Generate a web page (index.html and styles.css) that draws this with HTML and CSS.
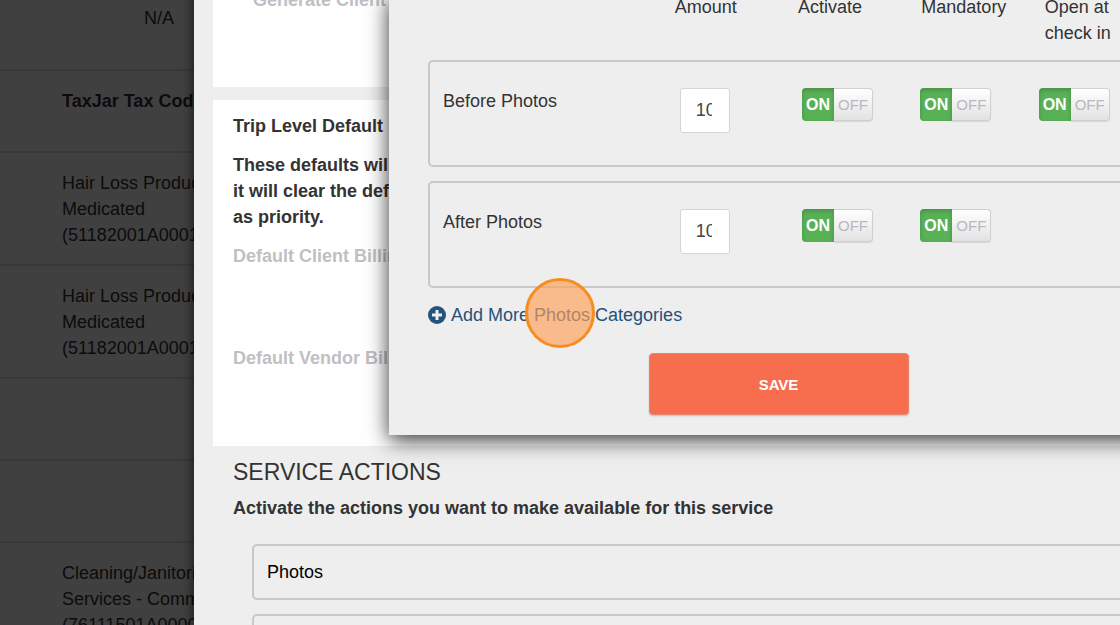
FILE: index.html
```html
<!DOCTYPE html>
<html lang="en">
<head>
    <meta charset="UTF-8">
    <meta name="viewport" content="width=device-width, initial-scale=1.0">
    <title>Service Settings</title>
    <link rel="stylesheet" href="styles.css">
</head>
<body>
    <!-- Page behind the drawer -->
    <table class="tax-table">
        <tr class="first-row"><td class="centered">N/A</td></tr>
        <tr><th>TaxJar Tax Code</th></tr>
        <tr><td>Hair Loss Products -<br>Medicated<br>(51182001A0001)</td></tr>
        <tr><td>Hair Loss Products -<br>Medicated<br>(51182001A0001)</td></tr>
        <tr><td></td></tr>
        <tr><td></td></tr>
        <tr><td>Cleaning/Janitorial<br>Services - Commercial<br>(76111501A0000)</td></tr>
    </table>
    <div class="overlay"></div>

    <!-- Service drawer -->
    <div class="drawer">
        <div class="card billing-card">
            <p class="muted">Generate Client</p>
        </div>
        <div class="card defaults-card">
            <h3>Trip Level Default</h3>
            <p class="note">These defaults will<br>it will clear the defaults<br>as priority.</p>
            <p class="muted">Default Client Billing</p>
            <p class="muted">Default Vendor Billing</p>
        </div>
        <div class="service-actions">
            <h2>SERVICE ACTIONS</h2>
            <p>Activate the actions you want to make available for this service</p>
            <div class="action-box">Photos</div>
            <div class="action-box"></div>
        </div>
    </div>

    <!-- Photo categories popup -->
    <div class="modal">
        <div class="modal-body">
            <div class="grid header">
                <span class="name"></span>
                <span>Amount</span>
                <span>Activate</span>
                <span>Mandatory</span>
                <span>Open at<br>check in</span>
            </div>
            <div class="grid category">
                <label class="name" for="beforeAmount">Before Photos</label>
                <input class="amount" type="text" id="beforeAmount" value="10">
                <label class="switch"><input type="checkbox" aria-label="Activate before photos" checked><span class="on">ON</span><span class="off">OFF</span></label>
                <label class="switch"><input type="checkbox" aria-label="Before photos mandatory" checked><span class="on">ON</span><span class="off">OFF</span></label>
                <label class="switch"><input type="checkbox" aria-label="Open before photos at check in" checked><span class="on">ON</span><span class="off">OFF</span></label>
            </div>
            <div class="grid category">
                <label class="name" for="afterAmount">After Photos</label>
                <input class="amount" type="text" id="afterAmount" value="10">
                <label class="switch"><input type="checkbox" aria-label="Activate after photos" checked><span class="on">ON</span><span class="off">OFF</span></label>
                <label class="switch"><input type="checkbox" aria-label="After photos mandatory" checked><span class="on">ON</span><span class="off">OFF</span></label>
            </div>
            <a href="#" class="add-link">
                <svg viewBox="0 0 18 18" width="18" height="18">
                    <circle cx="9" cy="9" r="9" fill="#23527c"/>
                    <path d="M9 4v10M4 9h10" stroke="#eee" stroke-width="3"/>
                </svg>
                Add More Photos Categories
            </a>
        </div>
        <button type="button" class="save-btn">SAVE</button>
    </div>

    <div class="click-marker"></div>
</body>
</html>
```
FILE: styles.css
```css
* {
    margin: 0;
    padding: 0;
    box-sizing: border-box;
}

body {
    position: relative;
    height: 100vh;
    overflow: hidden;
    background-color: #fff;
    color: #333;
    font-family: "Liberation Sans", Arial, sans-serif;
    font-size: 18px;
    line-height: 26px;
}

.tax-table {
    width: 100%;
    border-collapse: collapse;
}

.tax-table td,
.tax-table th {
    height: 82px;
    padding: 17px 0 16px 62px;
    border-bottom: 2px solid #ddd;
    text-align: left;
    vertical-align: top;
}

.tax-table .first-row td {
    height: 70px;
    padding-top: 5px;
}

.tax-table .centered {
    padding-left: 144px;
}

.overlay {
    position: absolute;
    inset: 0;
    background-color: rgba(0, 0, 0, 0.75);
}

.drawer {
    position: absolute;
    top: -13px;
    right: 0;
    bottom: 0;
    left: 194px;
    padding-left: 19px;
    overflow: hidden;
    background-color: #eee;
    box-shadow: 0 0 12px rgba(0, 0, 0, 0.7);
}

.card {
    background-color: #fff;
}

.muted {
    color: #bfbfc4;
    font-weight: bold;
}

.billing-card {
    height: 100px;
    margin-bottom: 13px;
    padding-left: 40px;
}

.defaults-card {
    height: 346px;
    padding: 13px 20px;
}

.defaults-card h3 {
    margin-bottom: 13px;
    font-size: 18px;
}

.defaults-card .note {
    margin-bottom: 13px;
    font-weight: bold;
}

.defaults-card .muted {
    margin-bottom: 76px;
}

.service-actions {
    padding: 13px 0 0 20px;
}

.service-actions h2 {
    margin-bottom: 10px;
    font-size: 23px;
    font-weight: normal;
}

.service-actions p {
    margin-bottom: 23px;
    font-weight: bold;
}

.action-box {
    height: 56px;
    margin: 0 -10px 14px 19px;
    padding: 13px;
    border: 2px solid #c8c8c8;
    border-radius: 5px;
    color: #000;
}

.modal {
    position: absolute;
    top: -6px;
    right: -48px;
    left: 389px;
    padding-bottom: 20px;
    background-color: #eee;
    box-shadow: 0 5px 20px rgba(0, 0, 0, 0.8);
}

.modal-body {
    padding-left: 39px;
}

.grid {
    display: grid;
    grid-template-columns: repeat(6, 1fr);
    align-items: start;
}

.grid .name {
    grid-column: span 2;
}

.header {
    margin-bottom: 14px;
}

.category {
    height: 107px;
    margin-bottom: 14px;
    padding: 26px 13px;
    border: 2px solid #c8c8c8;
    border-radius: 5px;
}

.amount {
    width: 50px;
    height: 45px;
    padding: 0 17px 0 15px;
    border: 1px solid #d5d5d5;
    border-radius: 3px;
    background-color: #fff;
    color: #444;
    font-family: inherit;
    font-size: 18px;
}

.switch {
    display: flex;
    position: relative;
    justify-self: start;
    margin-left: 4px;
    line-height: 33px;
    text-align: center;
    cursor: pointer;
}

.switch input {
    position: absolute;
    opacity: 0;
}

.switch .on {
    width: 32px;
    height: 33px;
    border-radius: 4px 0 0 4px;
    background-color: #59b156;
    box-shadow: inset 0 2px 4px rgba(0, 0, 0, 0.2);
    color: #fff;
    font-size: 16px;
    font-weight: bold;
}

.switch .off {
    width: 39px;
    height: 33px;
    border: 1px solid #d0d0d0;
    border-left: 0;
    border-radius: 0 4px 4px 0;
    background-image: linear-gradient(#fff, #e2e2e2);
    box-shadow: 0 1px 1px rgba(0, 0, 0, 0.1);
    color: #b8b8bd;
    font-size: 15px;
    line-height: 31px;
}

.add-link {
    display: flex;
    align-items: center;
    gap: 5px;
    color: #23527c;
    text-decoration: none;
}

.save-btn {
    display: block;
    width: 260px;
    height: 62px;
    margin: 25px auto 0;
    border: 1px solid #e78570;
    border-radius: 4px;
    background-color: #f66e4e;
    box-shadow: 0 1px 2px rgba(0, 0, 0, 0.2);
    color: #fff;
    font-family: inherit;
    font-size: 15px;
    font-weight: bold;
    cursor: pointer;
}

.click-marker {
    position: absolute;
    top: 278px;
    left: 525px;
    width: 70px;
    height: 70px;
    border: 3px solid #f78c1f;
    border-radius: 50%;
    background-color: rgba(255, 160, 88, 0.65);
    pointer-events: none;
}
```
